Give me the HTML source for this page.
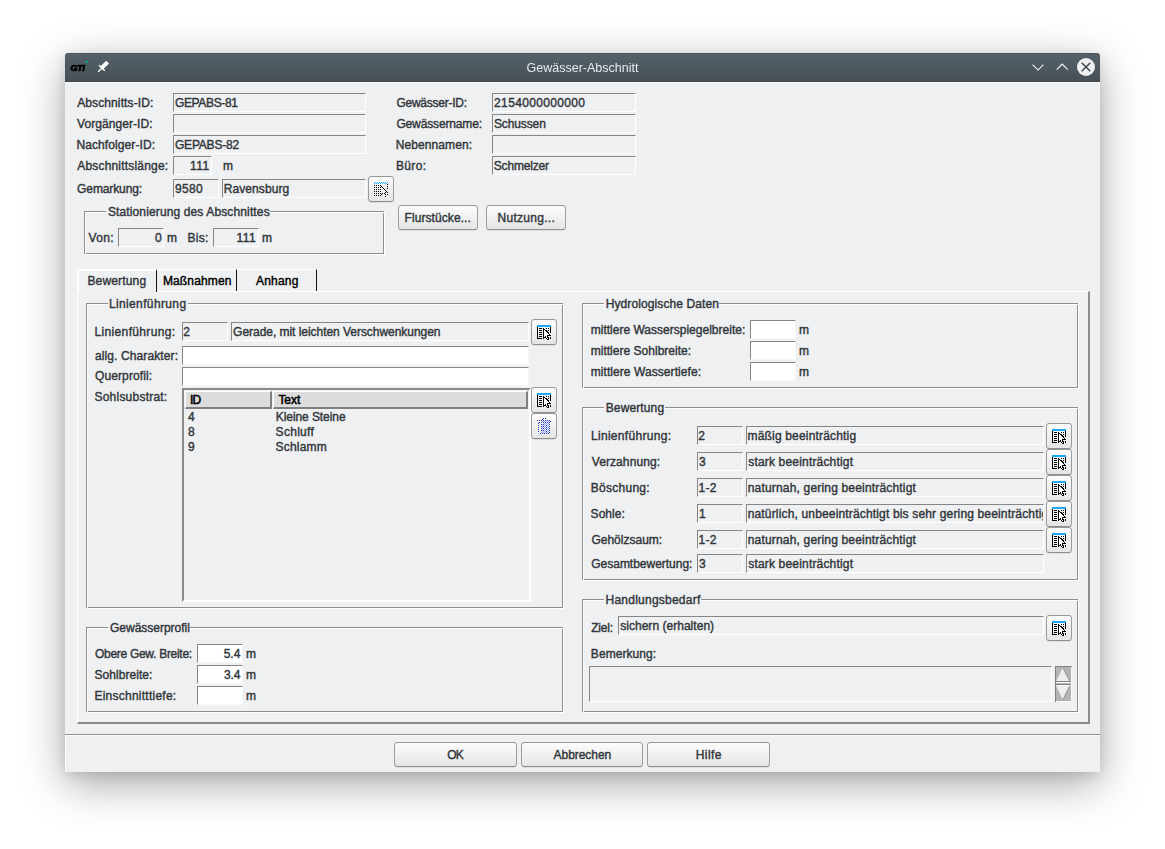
<!DOCTYPE html>
<html lang="de"><head><meta charset="utf-8"><title>Gewässer-Abschnitt</title>
<style>
html,body{margin:0;padding:0;background:#fff;}
body{width:1165px;height:849px;position:relative;overflow:hidden;font-family:"Liberation Sans",sans-serif;font-size:12px;color:#31363b;}
#win{position:absolute;left:65px;top:53px;width:1035px;height:719px;background:#eff0f1;border-radius:3px 3px 0 0;box-shadow:0 12px 44px rgba(0,0,0,.35),0 3px 12px rgba(0,0,0,.10);}
#tb{position:absolute;left:0;top:0;width:1035px;height:29px;box-sizing:border-box;border-radius:3px 3px 0 0;background:linear-gradient(#556169,#475057);border-top:1px solid #4b545b;border-bottom:1px solid #3f474d;}
#tbl{position:absolute;left:0;top:29px;width:1035px;height:1px;background:#f8f9f9;}
#title{position:absolute;left:0;top:1px;width:1035px;height:29px;line-height:28px;text-align:center;color:#e8eaeb;font-size:12.5px;will-change:transform;}
.abs{position:absolute;}
#gti{position:absolute;left:5.3px;top:7.8px;font:italic bold 9.5px/14px "Liberation Sans",sans-serif;color:#000;-webkit-text-stroke:0.7px #000;letter-spacing:-0.6px;}
#gdot{position:absolute;left:20px;top:7.7px;width:2.6px;height:2.6px;border-radius:50%;background:#00a58a;}
span{position:relative;}
.t{position:absolute;white-space:nowrap;-webkit-text-stroke:0.4px #31363b;}
.f{position:absolute;box-sizing:border-box;border-top:1px solid #868686;border-left:1px solid #868686;border-bottom:1px solid #fff;border-right:1px solid #fff;background:#eff0f1;white-space:nowrap;overflow:hidden;-webkit-text-stroke:0.4px #31363b;}
.f.w{background:#fff;border-right-color:#f4f5f5;border-bottom-color:#f7f8f8;}
.g{position:absolute;box-sizing:border-box;border:1px solid #8e8e8e;}
.gi{position:absolute;left:0;top:0;right:-2px;bottom:-2px;border:1px solid #fff;}
.gt{background:#eff0f1;padding:0 1px;}
.b{position:absolute;box-sizing:border-box;border:1px solid #9c9c9c;border-top-color:#979797;border-bottom-color:#8e8e8e;border-radius:3.5px;background:linear-gradient(#fcfcfc,#e5e5e5);text-align:center;white-space:nowrap;-webkit-text-stroke:0.4px #31363b;box-shadow:0 1px 0 rgba(0,0,0,.08);}
.b svg{position:absolute;left:4px;top:4px;}
.th{background:#dcdcdc;box-sizing:border-box;border-top:1px solid #fff;border-left:1px solid #fff;border-right:2px solid #7f7f7f;border-bottom:2px solid #7f7f7f;}
.hd{color:#000;-webkit-text-stroke:0.55px #000;}
.tb2{color:#000;-webkit-text-stroke:0.4px #000;}
</style></head><body>
<div id="win"><div id="tb"></div><div id="tbl"></div><div id="title">Gewässer-Abschnitt</div>
<div id="gti">GTI</div><div id="gdot"></div>
<svg class="abs" style="left:0;top:0" width="1035" height="29" viewBox="0 0 1035 29" fill="none" stroke="#fcfcfc" stroke-width="1.05">
<path d="M33.2 18.7 L37 14.9" stroke-width="1.4"/><path d="M33.9 12.2 L39.8 17.7" stroke-width="1.5"/>
<path d="M38.2 16.2 L35.4 13.3 L41.3 7.7 L44.1 10.6 Z" fill="#fcfcfc" stroke="none"/>
<path d="M967.6 11.7 L973 17.1 L978.4 11.7"/><path d="M991.7 16.6 L997.2 11.1 L1002.7 16.6"/>
<circle cx="1021" cy="14" r="9" fill="#eff0f1" stroke="none"/>
<path d="M1016.7 9.7 L1025.3 18.3 M1025.3 9.7 L1016.7 18.3" stroke="#3a3f44" stroke-width="1.3"/>
</svg></div>

<div class="t " style="left:77px;top:94px;height:19px;line-height:19px;"><span style="letter-spacing:0.11px;left:0.2px;">Abschnitts-ID:</span></div>
<div class="t " style="left:77px;top:115px;height:19px;line-height:19px;"><span style="letter-spacing:0.06px;left:0.1px;">Vorgänger-ID:</span></div>
<div class="t " style="left:77px;top:136px;height:19px;line-height:19px;"><span style="letter-spacing:0.09px;left:-0.5px;">Nachfolger-ID:</span></div>
<div class="t " style="left:77px;top:157px;height:19px;line-height:19px;"><span style="letter-spacing:0.19px;left:0.2px;">Abschnittslänge:</span></div>
<div class="t " style="left:77px;top:180px;height:19px;line-height:19px;"><span style="letter-spacing:-0.11px;left:0.1px;">Gemarkung:</span></div>
<div class="f" style="left:173px;top:93px;width:193px;height:19px;line-height:18px;padding-left:2px;"><span style="letter-spacing:-0.36px;left:-1.0px;">GEPABS-81</span></div>
<div class="f" style="left:173px;top:114px;width:193px;height:19px;line-height:18px;padding-left:2px;"></div>
<div class="f" style="left:173px;top:135px;width:193px;height:19px;line-height:18px;padding-left:2px;"><span style="letter-spacing:-0.21px;left:-1.0px;">GEPABS-82</span></div>
<div class="f" style="left:173px;top:156px;width:39px;height:19px;line-height:18px;text-align:right;padding-right:2px;"><span style="letter-spacing:0.45px;left:0.6px;">111</span></div>
<div class="t " style="left:223px;top:157px;height:19px;line-height:19px;"><span style="letter-spacing:0.00px;left:-0.1px;">m</span></div>
<div class="f" style="left:173px;top:179px;width:46px;height:19px;line-height:18px;padding-left:2px;"><span style="letter-spacing:0.32px;left:-0.9px;">9580</span></div>
<div class="f" style="left:222px;top:179px;width:144px;height:19px;line-height:18px;padding-left:2px;"><span style="letter-spacing:0.09px;left:-1.3px;">Ravensburg</span></div>
<div class="b " style="left:368px;top:176px;width:26px;height:26px;line-height:26px"><svg width="16" height="16" viewBox="0 0 16 16" shape-rendering="crispEdges"><rect x="2" y="1" width="1" height="1" fill="#1ea9f3"/><rect x="4" y="1" width="1" height="1" fill="#1ea9f3"/><rect x="6" y="1" width="1" height="1" fill="#1ea9f3"/><rect x="8" y="1" width="1" height="1" fill="#1ea9f3"/><rect x="10" y="1" width="1" height="1" fill="#1ea9f3"/><rect x="12" y="1" width="1" height="1" fill="#1ea9f3"/><rect x="14" y="1" width="1" height="1" fill="#1ea9f3"/><rect x="1" y="2" width="1" height="1" fill="#1ea9f3"/><rect x="3" y="2" width="1" height="1" fill="#1ea9f3"/><rect x="5" y="2" width="1" height="1" fill="#1ea9f3"/><rect x="7" y="2" width="1" height="1" fill="#1ea9f3"/><rect x="9" y="2" width="1" height="1" fill="#1ea9f3"/><rect x="11" y="2" width="1" height="1" fill="#1ea9f3"/><rect x="13" y="2" width="1" height="1" fill="#1ea9f3"/><rect x="14" y="3" width="1" height="1" fill="#000"/><rect x="1" y="4" width="1" height="1" fill="#000"/><rect x="3" y="4" width="1" height="1" fill="#000"/><rect x="5" y="4" width="1" height="1" fill="#000"/><rect x="7" y="4" width="1" height="1" fill="#000"/><rect x="8" y="5" width="1" height="1" fill="#000"/><rect x="14" y="5" width="1" height="1" fill="#000"/><rect x="1" y="6" width="1" height="1" fill="#000"/><rect x="3" y="6" width="1" height="1" fill="#000"/><rect x="5" y="6" width="1" height="1" fill="#000"/><rect x="7" y="6" width="1" height="1" fill="#000"/><rect x="9" y="6" width="1" height="1" fill="#000"/><rect x="10" y="7" width="1" height="1" fill="#000"/><rect x="14" y="7" width="1" height="1" fill="#000"/><rect x="1" y="8" width="1" height="1" fill="#000"/><rect x="3" y="8" width="1" height="1" fill="#000"/><rect x="5" y="8" width="1" height="1" fill="#000"/><rect x="7" y="8" width="1" height="1" fill="#000"/><rect x="11" y="8" width="1" height="1" fill="#000"/><rect x="12" y="9" width="1" height="1" fill="#000"/><rect x="1" y="10" width="1" height="1" fill="#000"/><rect x="3" y="10" width="1" height="1" fill="#000"/><rect x="5" y="10" width="1" height="1" fill="#000"/><rect x="7" y="10" width="1" height="1" fill="#000"/><rect x="13" y="10" width="1" height="1" fill="#000"/><rect x="12" y="11" width="1" height="1" fill="#000"/><rect x="14" y="11" width="1" height="1" fill="#000"/><rect x="1" y="12" width="1" height="1" fill="#000"/><rect x="3" y="12" width="1" height="1" fill="#000"/><rect x="5" y="12" width="1" height="1" fill="#000"/><rect x="7" y="12" width="1" height="1" fill="#000"/><rect x="9" y="12" width="1" height="1" fill="#000"/><rect x="11" y="12" width="1" height="1" fill="#000"/><rect x="8" y="13" width="1" height="1" fill="#000"/><rect x="12" y="13" width="1" height="1" fill="#000"/><rect x="14" y="13" width="1" height="1" fill="#000"/><rect x="1" y="14" width="1" height="1" fill="#000"/><rect x="3" y="14" width="1" height="1" fill="#000"/><rect x="5" y="14" width="1" height="1" fill="#000"/><rect x="7" y="14" width="1" height="1" fill="#000"/><rect x="12" y="15" width="1" height="1" fill="#000"/></svg></div>
<div class="t " style="left:396px;top:94px;height:19px;line-height:19px;"><span style="letter-spacing:-0.24px;left:0.4px;">Gewässer-ID:</span></div>
<div class="t " style="left:396px;top:115px;height:19px;line-height:19px;"><span style="letter-spacing:-0.14px;left:0.4px;">Gewässername:</span></div>
<div class="t " style="left:396px;top:136px;height:19px;line-height:19px;"><span style="letter-spacing:0.08px;left:-0.2px;">Nebennamen:</span></div>
<div class="t " style="left:396px;top:157px;height:19px;line-height:19px;"><span style="letter-spacing:0.36px;left:-0.1px;">Büro:</span></div>
<div class="f" style="left:492px;top:93px;width:144px;height:19px;line-height:18px;padding-left:2px;"><span style="letter-spacing:0.34px;left:-0.9px;">2154000000000</span></div>
<div class="f" style="left:492px;top:114px;width:144px;height:19px;line-height:18px;padding-left:2px;"><span style="letter-spacing:-0.11px;left:-1.1px;">Schussen</span></div>
<div class="f" style="left:492px;top:135px;width:144px;height:19px;line-height:18px;padding-left:2px;"></div>
<div class="f" style="left:492px;top:156px;width:144px;height:19px;line-height:18px;padding-left:2px;"><span style="letter-spacing:-0.16px;left:-1.3px;">Schmelzer</span></div>
<div class="g" style="left:84px;top:211px;width:300px;height:43px"><div class="gi"></div></div>
<div class="t gt" style="left:106px;top:203px;height:19px;line-height:19px;"><span style="letter-spacing:0.13px;left:0.9px;">Stationierung des Abschnittes</span></div>
<div class="t " style="left:88px;top:229px;height:19px;line-height:19px;"><span style="letter-spacing:0.31px;left:0.6px;">Von:</span></div>
<div class="f" style="left:118px;top:228px;width:46px;height:19px;line-height:18px;text-align:right;padding-right:2px;"><span style="letter-spacing:0.00px;left:0.8px;">0</span></div>
<div class="t " style="left:168px;top:229px;height:19px;line-height:19px;"><span style="letter-spacing:0.00px;left:-0.9px;">m</span></div>
<div class="t " style="left:188px;top:229px;height:19px;line-height:19px;"><span style="letter-spacing:0.29px;left:-0.6px;">Bis:</span></div>
<div class="f" style="left:213px;top:228px;width:46px;height:19px;line-height:18px;text-align:right;padding-right:2px;"><span style="letter-spacing:0.49px;left:0.3px;">111</span></div>
<div class="t " style="left:263px;top:229px;height:19px;line-height:19px;"><span style="letter-spacing:0.00px;left:-0.9px;">m</span></div>
<div class="b " style="left:398px;top:205px;width:80px;height:25px;line-height:25px"><span style="letter-spacing:0.08px;left:-0.3px;">Flurstücke...</span></div>
<div class="b " style="left:486px;top:205px;width:80px;height:25px;line-height:25px"><span style="letter-spacing:0.29px;left:0.3px;">Nutzung...</span></div>
<div class="abs" style="left:77px;top:291px;width:1013px;height:433px;box-sizing:border-box;border-top:1px solid #fff;border-left:1px solid #fff;border-right:2px solid #8c8c8c;border-bottom:2px solid #8c8c8c;"></div>
<div class="abs" style="left:77px;top:269px;width:80px;height:23px;box-sizing:border-box;border-top:2px solid #fff;border-left:2px solid #fff;border-right:1px solid #111;background:#eff0f1;"></div>
<div class="abs" style="left:157px;top:269px;width:80px;height:22px;box-sizing:border-box;border-top:1px solid #fff;border-right:1px solid #111;"></div>
<div class="abs" style="left:237px;top:269px;width:80px;height:22px;box-sizing:border-box;border-top:1px solid #fff;border-right:1px solid #111;"></div>
<div class="t " style="left:88px;top:272px;height:19px;line-height:19px;"><span style="letter-spacing:0.17px;left:-0.6px;">Bewertung</span></div>
<div class="t tb2" style="left:163px;top:272px;height:19px;line-height:19px;"><span style="letter-spacing:0.14px;left:-0.1px;">Maßnahmen</span></div>
<div class="t tb2" style="left:256px;top:272px;height:19px;line-height:19px;"><span style="letter-spacing:0.19px;left:0.0px;">Anhang</span></div>
<div class="g" style="left:86px;top:303px;width:477px;height:305px"><div class="gi"></div></div>
<div class="t gt" style="left:108px;top:295px;height:19px;line-height:19px;"><span style="letter-spacing:0.37px;left:-0.1px;">Linienführung</span></div>
<div class="t " style="left:95px;top:323px;height:19px;line-height:19px;"><span style="letter-spacing:0.35px;left:-0.5px;">Linienführung:</span></div>
<div class="f" style="left:182px;top:322px;width:46px;height:19px;line-height:18px;padding-left:2px;"><span style="letter-spacing:0.00px;left:-1.7px;">2</span></div>
<div class="f" style="left:231px;top:322px;width:298px;height:19px;line-height:18px;padding-left:2px;"><span style="letter-spacing:-0.04px;left:-0.9px;">Gerade, mit leichten Verschwenkungen</span></div>
<div class="b " style="left:531px;top:319px;width:26px;height:26px;line-height:26px"><svg width="16" height="16" viewBox="0 0 16 16" shape-rendering="crispEdges"><rect x="1" y="1" width="14" height="1" fill="#1ea9f3"/><rect x="1" y="2" width="14" height="1" fill="#1ea9f3"/><rect x="1" y="3" width="1" height="1" fill="#000"/><rect x="14" y="3" width="1" height="1" fill="#000"/><rect x="1" y="4" width="1" height="1" fill="#000"/><rect x="3" y="4" width="3" height="1" fill="#000"/><rect x="7" y="4" width="1" height="1" fill="#000"/><rect x="10" y="4" width="1" height="1" fill="#000"/><rect x="12" y="4" width="1" height="1" fill="#000"/><rect x="14" y="4" width="1" height="1" fill="#000"/><rect x="1" y="5" width="1" height="1" fill="#000"/><rect x="7" y="5" width="2" height="1" fill="#000"/><rect x="14" y="5" width="1" height="1" fill="#000"/><rect x="1" y="6" width="1" height="1" fill="#000"/><rect x="3" y="6" width="3" height="1" fill="#000"/><rect x="7" y="6" width="1" height="1" fill="#000"/><rect x="9" y="6" width="2" height="1" fill="#000"/><rect x="12" y="6" width="1" height="1" fill="#000"/><rect x="14" y="6" width="1" height="1" fill="#000"/><rect x="8" y="6" width="1" height="1" fill="#fff"/><rect x="1" y="7" width="1" height="1" fill="#000"/><rect x="7" y="7" width="1" height="1" fill="#000"/><rect x="10" y="7" width="2" height="1" fill="#000"/><rect x="14" y="7" width="1" height="1" fill="#000"/><rect x="8" y="7" width="2" height="1" fill="#fff"/><rect x="1" y="8" width="1" height="1" fill="#000"/><rect x="3" y="8" width="3" height="1" fill="#000"/><rect x="7" y="8" width="1" height="1" fill="#000"/><rect x="11" y="8" width="2" height="1" fill="#000"/><rect x="14" y="8" width="1" height="1" fill="#000"/><rect x="8" y="8" width="3" height="1" fill="#fff"/><rect x="1" y="9" width="1" height="1" fill="#000"/><rect x="7" y="9" width="1" height="1" fill="#000"/><rect x="12" y="9" width="1" height="1" fill="#000"/><rect x="8" y="9" width="4" height="1" fill="#fff"/><rect x="1" y="10" width="1" height="1" fill="#000"/><rect x="3" y="10" width="3" height="1" fill="#000"/><rect x="7" y="10" width="1" height="1" fill="#000"/><rect x="13" y="10" width="1" height="1" fill="#000"/><rect x="8" y="10" width="5" height="1" fill="#fff"/><rect x="1" y="11" width="1" height="1" fill="#000"/><rect x="7" y="11" width="1" height="1" fill="#000"/><rect x="11" y="11" width="4" height="1" fill="#000"/><rect x="8" y="11" width="3" height="1" fill="#fff"/><rect x="1" y="12" width="1" height="1" fill="#000"/><rect x="3" y="12" width="3" height="1" fill="#000"/><rect x="7" y="12" width="1" height="1" fill="#000"/><rect x="9" y="12" width="1" height="1" fill="#000"/><rect x="11" y="12" width="1" height="1" fill="#000"/><rect x="8" y="12" width="1" height="1" fill="#fff"/><rect x="10" y="12" width="1" height="1" fill="#fff"/><rect x="1" y="13" width="1" height="1" fill="#000"/><rect x="7" y="13" width="3" height="1" fill="#000"/><rect x="11" y="13" width="2" height="1" fill="#000"/><rect x="14" y="13" width="1" height="1" fill="#000"/><rect x="10" y="13" width="1" height="1" fill="#fff"/><rect x="1" y="14" width="5" height="1" fill="#000"/><rect x="7" y="14" width="1" height="1" fill="#000"/><rect x="10" y="14" width="1" height="1" fill="#000"/><rect x="12" y="14" width="1" height="1" fill="#000"/><rect x="14" y="14" width="1" height="1" fill="#000"/><rect x="11" y="14" width="1" height="1" fill="#fff"/><rect x="11" y="15" width="2" height="1" fill="#000"/></svg></div>
<div class="t " style="left:95px;top:347px;height:19px;line-height:19px;"><span style="letter-spacing:0.11px;left:0.0px;">allg. Charakter:</span></div>
<div class="f w" style="left:182px;top:346px;width:347px;height:19px;line-height:18px;padding-left:2px;"></div>
<div class="t " style="left:95px;top:367px;height:19px;line-height:19px;"><span style="letter-spacing:0.11px;left:-0.0px;">Querprofil:</span></div>
<div class="f w" style="left:182px;top:367px;width:347px;height:19px;line-height:18px;padding-left:2px;"></div>
<div class="t " style="left:95px;top:388px;height:19px;line-height:19px;"><span style="letter-spacing:0.22px;left:-0.5px;">Sohlsubstrat:</span></div>
<div class="abs" style="left:182px;top:388px;width:349px;height:214px;box-sizing:border-box;border-top:2px solid #8a8a8a;border-left:2px solid #8a8a8a;border-right:2px solid #fff;border-bottom:2px solid #fff;"></div>
<div class="abs th" style="left:185px;top:391px;width:87px;height:18px;"></div>
<div class="abs th" style="left:273px;top:391px;width:255px;height:18px;"></div>
<div class="t hd" style="left:190px;top:391px;height:18px;line-height:18px;"><span style="letter-spacing:-0.80px;left:-0.1px;">ID</span></div>
<div class="t hd" style="left:278px;top:391px;height:18px;line-height:18px;"><span style="letter-spacing:-0.03px;left:0.4px;">Text</span></div>
<div class="t " style="left:188px;top:410px;height:15px;line-height:15px;"><span>4</span></div>
<div class="t " style="left:276px;top:410px;height:15px;line-height:15px;"><span style="letter-spacing:-0.08px;left:-0.2px;">Kleine Steine</span></div>
<div class="t " style="left:188px;top:425px;height:15px;line-height:15px;"><span>8</span></div>
<div class="t " style="left:276px;top:425px;height:15px;line-height:15px;"><span style="letter-spacing:0.28px;left:-0.4px;">Schluff</span></div>
<div class="t " style="left:188px;top:440px;height:15px;line-height:15px;"><span>9</span></div>
<div class="t " style="left:276px;top:440px;height:15px;line-height:15px;"><span style="letter-spacing:0.19px;left:-0.4px;">Schlamm</span></div>
<div class="b " style="left:531px;top:387px;width:26px;height:26px;line-height:26px"><svg width="16" height="16" viewBox="0 0 16 16" shape-rendering="crispEdges"><rect x="1" y="1" width="14" height="1" fill="#1ea9f3"/><rect x="1" y="2" width="14" height="1" fill="#1ea9f3"/><rect x="1" y="3" width="1" height="1" fill="#000"/><rect x="14" y="3" width="1" height="1" fill="#000"/><rect x="1" y="4" width="1" height="1" fill="#000"/><rect x="3" y="4" width="3" height="1" fill="#000"/><rect x="7" y="4" width="1" height="1" fill="#000"/><rect x="10" y="4" width="1" height="1" fill="#000"/><rect x="12" y="4" width="1" height="1" fill="#000"/><rect x="14" y="4" width="1" height="1" fill="#000"/><rect x="1" y="5" width="1" height="1" fill="#000"/><rect x="7" y="5" width="2" height="1" fill="#000"/><rect x="14" y="5" width="1" height="1" fill="#000"/><rect x="1" y="6" width="1" height="1" fill="#000"/><rect x="3" y="6" width="3" height="1" fill="#000"/><rect x="7" y="6" width="1" height="1" fill="#000"/><rect x="9" y="6" width="2" height="1" fill="#000"/><rect x="12" y="6" width="1" height="1" fill="#000"/><rect x="14" y="6" width="1" height="1" fill="#000"/><rect x="8" y="6" width="1" height="1" fill="#fff"/><rect x="1" y="7" width="1" height="1" fill="#000"/><rect x="7" y="7" width="1" height="1" fill="#000"/><rect x="10" y="7" width="2" height="1" fill="#000"/><rect x="14" y="7" width="1" height="1" fill="#000"/><rect x="8" y="7" width="2" height="1" fill="#fff"/><rect x="1" y="8" width="1" height="1" fill="#000"/><rect x="3" y="8" width="3" height="1" fill="#000"/><rect x="7" y="8" width="1" height="1" fill="#000"/><rect x="11" y="8" width="2" height="1" fill="#000"/><rect x="14" y="8" width="1" height="1" fill="#000"/><rect x="8" y="8" width="3" height="1" fill="#fff"/><rect x="1" y="9" width="1" height="1" fill="#000"/><rect x="7" y="9" width="1" height="1" fill="#000"/><rect x="12" y="9" width="1" height="1" fill="#000"/><rect x="8" y="9" width="4" height="1" fill="#fff"/><rect x="1" y="10" width="1" height="1" fill="#000"/><rect x="3" y="10" width="3" height="1" fill="#000"/><rect x="7" y="10" width="1" height="1" fill="#000"/><rect x="13" y="10" width="1" height="1" fill="#000"/><rect x="8" y="10" width="5" height="1" fill="#fff"/><rect x="1" y="11" width="1" height="1" fill="#000"/><rect x="7" y="11" width="1" height="1" fill="#000"/><rect x="11" y="11" width="4" height="1" fill="#000"/><rect x="8" y="11" width="3" height="1" fill="#fff"/><rect x="1" y="12" width="1" height="1" fill="#000"/><rect x="3" y="12" width="3" height="1" fill="#000"/><rect x="7" y="12" width="1" height="1" fill="#000"/><rect x="9" y="12" width="1" height="1" fill="#000"/><rect x="11" y="12" width="1" height="1" fill="#000"/><rect x="8" y="12" width="1" height="1" fill="#fff"/><rect x="10" y="12" width="1" height="1" fill="#fff"/><rect x="1" y="13" width="1" height="1" fill="#000"/><rect x="7" y="13" width="3" height="1" fill="#000"/><rect x="11" y="13" width="2" height="1" fill="#000"/><rect x="14" y="13" width="1" height="1" fill="#000"/><rect x="10" y="13" width="1" height="1" fill="#fff"/><rect x="1" y="14" width="5" height="1" fill="#000"/><rect x="7" y="14" width="1" height="1" fill="#000"/><rect x="10" y="14" width="1" height="1" fill="#000"/><rect x="12" y="14" width="1" height="1" fill="#000"/><rect x="14" y="14" width="1" height="1" fill="#000"/><rect x="11" y="14" width="1" height="1" fill="#fff"/><rect x="11" y="15" width="2" height="1" fill="#000"/></svg></div>
<div class="b " style="left:531px;top:413px;width:26px;height:26px;line-height:26px"><svg width="16" height="16" viewBox="0 0 16 16" shape-rendering="crispEdges"><rect x="7" y="0" width="1" height="1" fill="#2335b0"/><rect x="9" y="0" width="1" height="1" fill="#2335b0"/><rect x="6" y="1" width="1" height="1" fill="#2335b0"/><rect x="1" y="2" width="1" height="1" fill="#2335b0"/><rect x="3" y="2" width="1" height="1" fill="#2335b0"/><rect x="5" y="2" width="1" height="1" fill="#2335b0"/><rect x="7" y="2" width="1" height="1" fill="#2335b0"/><rect x="9" y="2" width="1" height="1" fill="#2335b0"/><rect x="11" y="2" width="1" height="1" fill="#2335b0"/><rect x="13" y="2" width="1" height="1" fill="#2335b0"/><rect x="14" y="3" width="1" height="1" fill="#2335b0"/><rect x="6" y="3" width="1" height="1" fill="#86a0f6"/><rect x="8" y="3" width="1" height="1" fill="#86a0f6"/><rect x="10" y="3" width="1" height="1" fill="#86a0f6"/><rect x="12" y="3" width="1" height="1" fill="#86a0f6"/><rect x="3" y="4" width="1" height="1" fill="#2335b0"/><rect x="5" y="4" width="1" height="1" fill="#2335b0"/><rect x="7" y="4" width="1" height="1" fill="#2335b0"/><rect x="9" y="4" width="1" height="1" fill="#2335b0"/><rect x="11" y="4" width="1" height="1" fill="#2335b0"/><rect x="13" y="4" width="1" height="1" fill="#2335b0"/><rect x="2" y="5" width="1" height="1" fill="#2335b0"/><rect x="8" y="5" width="1" height="1" fill="#86a0f6"/><rect x="10" y="5" width="1" height="1" fill="#86a0f6"/><rect x="12" y="5" width="1" height="1" fill="#86a0f6"/><rect x="5" y="6" width="1" height="1" fill="#2335b0"/><rect x="7" y="6" width="1" height="1" fill="#2335b0"/><rect x="13" y="6" width="1" height="1" fill="#2335b0"/><rect x="9" y="6" width="1" height="1" fill="#86a0f6"/><rect x="11" y="6" width="1" height="1" fill="#86a0f6"/><rect x="2" y="7" width="1" height="1" fill="#2335b0"/><rect x="10" y="7" width="1" height="1" fill="#2335b0"/><rect x="6" y="7" width="1" height="1" fill="#86a0f6"/><rect x="8" y="7" width="1" height="1" fill="#86a0f6"/><rect x="12" y="7" width="1" height="1" fill="#86a0f6"/><rect x="5" y="8" width="1" height="1" fill="#2335b0"/><rect x="7" y="8" width="1" height="1" fill="#2335b0"/><rect x="13" y="8" width="1" height="1" fill="#2335b0"/><rect x="9" y="8" width="1" height="1" fill="#86a0f6"/><rect x="11" y="8" width="1" height="1" fill="#86a0f6"/><rect x="2" y="9" width="1" height="1" fill="#2335b0"/><rect x="10" y="9" width="1" height="1" fill="#2335b0"/><rect x="6" y="9" width="1" height="1" fill="#86a0f6"/><rect x="8" y="9" width="1" height="1" fill="#86a0f6"/><rect x="12" y="9" width="1" height="1" fill="#86a0f6"/><rect x="5" y="10" width="1" height="1" fill="#2335b0"/><rect x="7" y="10" width="1" height="1" fill="#2335b0"/><rect x="13" y="10" width="1" height="1" fill="#2335b0"/><rect x="9" y="10" width="1" height="1" fill="#86a0f6"/><rect x="11" y="10" width="1" height="1" fill="#86a0f6"/><rect x="2" y="11" width="1" height="1" fill="#2335b0"/><rect x="10" y="11" width="1" height="1" fill="#2335b0"/><rect x="6" y="11" width="1" height="1" fill="#86a0f6"/><rect x="8" y="11" width="1" height="1" fill="#86a0f6"/><rect x="12" y="11" width="1" height="1" fill="#86a0f6"/><rect x="5" y="12" width="1" height="1" fill="#2335b0"/><rect x="7" y="12" width="1" height="1" fill="#2335b0"/><rect x="13" y="12" width="1" height="1" fill="#2335b0"/><rect x="9" y="12" width="1" height="1" fill="#86a0f6"/><rect x="11" y="12" width="1" height="1" fill="#86a0f6"/><rect x="2" y="13" width="1" height="1" fill="#2335b0"/><rect x="10" y="13" width="1" height="1" fill="#2335b0"/><rect x="6" y="13" width="1" height="1" fill="#86a0f6"/><rect x="8" y="13" width="1" height="1" fill="#86a0f6"/><rect x="12" y="13" width="1" height="1" fill="#86a0f6"/><rect x="13" y="14" width="1" height="1" fill="#2335b0"/><rect x="5" y="14" width="1" height="1" fill="#86a0f6"/><rect x="7" y="14" width="1" height="1" fill="#86a0f6"/><rect x="9" y="14" width="1" height="1" fill="#86a0f6"/><rect x="11" y="14" width="1" height="1" fill="#86a0f6"/><rect x="4" y="15" width="1" height="1" fill="#2335b0"/><rect x="6" y="15" width="1" height="1" fill="#2335b0"/><rect x="8" y="15" width="1" height="1" fill="#2335b0"/><rect x="10" y="15" width="1" height="1" fill="#2335b0"/><rect x="12" y="15" width="1" height="1" fill="#2335b0"/></svg></div>
<div class="g" style="left:86px;top:627px;width:477px;height:85px"><div class="gi"></div></div>
<div class="t gt" style="left:108px;top:619px;height:19px;line-height:19px;"><span style="letter-spacing:-0.01px;left:1.0px;">Gewässerprofil</span></div>
<div class="t " style="left:95px;top:645px;height:19px;line-height:19px;"><span style="letter-spacing:-0.29px;left:-0.0px;">Obere Gew. Breite:</span></div>
<div class="f w" style="left:197px;top:644px;width:46px;height:19px;line-height:18px;text-align:right;padding-right:2px;"><span style="letter-spacing:-0.02px;left:0.3px;">5.4</span></div>
<div class="t " style="left:247px;top:645px;height:19px;line-height:19px;"><span style="letter-spacing:0.00px;left:-0.9px;">m</span></div>
<div class="t " style="left:95px;top:666px;height:19px;line-height:19px;"><span style="letter-spacing:0.06px;left:-0.6px;">Sohlbreite:</span></div>
<div class="f w" style="left:197px;top:665px;width:46px;height:19px;line-height:18px;text-align:right;padding-right:2px;"><span style="letter-spacing:-0.06px;left:0.4px;">3.4</span></div>
<div class="t " style="left:247px;top:666px;height:19px;line-height:19px;"><span style="letter-spacing:0.00px;left:-0.9px;">m</span></div>
<div class="t " style="left:95px;top:687px;height:19px;line-height:19px;"><span style="letter-spacing:0.25px;left:-0.6px;">Einschnitttiefe:</span></div>
<div class="f w" style="left:197px;top:686px;width:46px;height:19px;line-height:18px;text-align:right;padding-right:2px;"></div>
<div class="t " style="left:247px;top:687px;height:19px;line-height:19px;"><span style="letter-spacing:0.00px;left:-0.9px;">m</span></div>
<div class="g" style="left:582px;top:303px;width:496px;height:85px"><div class="gi"></div></div>
<div class="t gt" style="left:604px;top:295px;height:19px;line-height:19px;"><span style="letter-spacing:0.10px;left:0.7px;">Hydrologische Daten</span></div>
<div class="t " style="left:591px;top:321px;height:19px;line-height:19px;"><span style="letter-spacing:0.01px;left:-0.3px;">mittlere Wasserspiegelbreite:</span></div>
<div class="f w" style="left:750px;top:320px;width:46px;height:19px;line-height:18px;padding-left:2px;"></div>
<div class="t " style="left:800px;top:321px;height:19px;line-height:19px;"><span style="letter-spacing:0.00px;left:-0.9px;">m</span></div>
<div class="t " style="left:591px;top:342px;height:19px;line-height:19px;"><span style="letter-spacing:0.02px;left:-0.3px;">mittlere Sohlbreite:</span></div>
<div class="f w" style="left:750px;top:341px;width:46px;height:19px;line-height:18px;padding-left:2px;"></div>
<div class="t " style="left:800px;top:342px;height:19px;line-height:19px;"><span style="letter-spacing:0.00px;left:-0.9px;">m</span></div>
<div class="t " style="left:591px;top:363px;height:19px;line-height:19px;"><span style="letter-spacing:0.07px;left:-0.3px;">mittlere Wassertiefe:</span></div>
<div class="f w" style="left:750px;top:362px;width:46px;height:19px;line-height:18px;padding-left:2px;"></div>
<div class="t " style="left:800px;top:363px;height:19px;line-height:19px;"><span style="letter-spacing:0.00px;left:-0.9px;">m</span></div>
<div class="g" style="left:582px;top:407px;width:496px;height:173px"><div class="gi"></div></div>
<div class="t gt" style="left:604px;top:399px;height:19px;line-height:19px;"><span style="letter-spacing:0.13px;left:0.7px;">Bewertung</span></div>
<div class="t " style="left:591px;top:427px;height:19px;line-height:19px;"><span style="letter-spacing:0.32px;left:-0.1px;">Linienführung:</span></div>
<div class="f" style="left:697px;top:426px;width:46px;height:19px;line-height:18px;padding-left:2px;"><span style="letter-spacing:0.00px;left:-1.7px;">2</span></div>
<div class="f" style="left:746px;top:426px;width:298px;height:19px;line-height:18px;padding-left:2px;"><span style="letter-spacing:0.18px;left:-1.5px;">mäßig beeinträchtig</span></div>
<div class="b " style="left:1046px;top:423px;width:26px;height:26px;line-height:26px"><svg width="16" height="16" viewBox="0 0 16 16" shape-rendering="crispEdges"><rect x="1" y="1" width="14" height="1" fill="#1ea9f3"/><rect x="1" y="2" width="14" height="1" fill="#1ea9f3"/><rect x="1" y="3" width="1" height="1" fill="#000"/><rect x="14" y="3" width="1" height="1" fill="#000"/><rect x="1" y="4" width="1" height="1" fill="#000"/><rect x="3" y="4" width="3" height="1" fill="#000"/><rect x="7" y="4" width="1" height="1" fill="#000"/><rect x="10" y="4" width="1" height="1" fill="#000"/><rect x="12" y="4" width="1" height="1" fill="#000"/><rect x="14" y="4" width="1" height="1" fill="#000"/><rect x="1" y="5" width="1" height="1" fill="#000"/><rect x="7" y="5" width="2" height="1" fill="#000"/><rect x="14" y="5" width="1" height="1" fill="#000"/><rect x="1" y="6" width="1" height="1" fill="#000"/><rect x="3" y="6" width="3" height="1" fill="#000"/><rect x="7" y="6" width="1" height="1" fill="#000"/><rect x="9" y="6" width="2" height="1" fill="#000"/><rect x="12" y="6" width="1" height="1" fill="#000"/><rect x="14" y="6" width="1" height="1" fill="#000"/><rect x="8" y="6" width="1" height="1" fill="#fff"/><rect x="1" y="7" width="1" height="1" fill="#000"/><rect x="7" y="7" width="1" height="1" fill="#000"/><rect x="10" y="7" width="2" height="1" fill="#000"/><rect x="14" y="7" width="1" height="1" fill="#000"/><rect x="8" y="7" width="2" height="1" fill="#fff"/><rect x="1" y="8" width="1" height="1" fill="#000"/><rect x="3" y="8" width="3" height="1" fill="#000"/><rect x="7" y="8" width="1" height="1" fill="#000"/><rect x="11" y="8" width="2" height="1" fill="#000"/><rect x="14" y="8" width="1" height="1" fill="#000"/><rect x="8" y="8" width="3" height="1" fill="#fff"/><rect x="1" y="9" width="1" height="1" fill="#000"/><rect x="7" y="9" width="1" height="1" fill="#000"/><rect x="12" y="9" width="1" height="1" fill="#000"/><rect x="8" y="9" width="4" height="1" fill="#fff"/><rect x="1" y="10" width="1" height="1" fill="#000"/><rect x="3" y="10" width="3" height="1" fill="#000"/><rect x="7" y="10" width="1" height="1" fill="#000"/><rect x="13" y="10" width="1" height="1" fill="#000"/><rect x="8" y="10" width="5" height="1" fill="#fff"/><rect x="1" y="11" width="1" height="1" fill="#000"/><rect x="7" y="11" width="1" height="1" fill="#000"/><rect x="11" y="11" width="4" height="1" fill="#000"/><rect x="8" y="11" width="3" height="1" fill="#fff"/><rect x="1" y="12" width="1" height="1" fill="#000"/><rect x="3" y="12" width="3" height="1" fill="#000"/><rect x="7" y="12" width="1" height="1" fill="#000"/><rect x="9" y="12" width="1" height="1" fill="#000"/><rect x="11" y="12" width="1" height="1" fill="#000"/><rect x="8" y="12" width="1" height="1" fill="#fff"/><rect x="10" y="12" width="1" height="1" fill="#fff"/><rect x="1" y="13" width="1" height="1" fill="#000"/><rect x="7" y="13" width="3" height="1" fill="#000"/><rect x="11" y="13" width="2" height="1" fill="#000"/><rect x="14" y="13" width="1" height="1" fill="#000"/><rect x="10" y="13" width="1" height="1" fill="#fff"/><rect x="1" y="14" width="5" height="1" fill="#000"/><rect x="7" y="14" width="1" height="1" fill="#000"/><rect x="10" y="14" width="1" height="1" fill="#000"/><rect x="12" y="14" width="1" height="1" fill="#000"/><rect x="14" y="14" width="1" height="1" fill="#000"/><rect x="11" y="14" width="1" height="1" fill="#fff"/><rect x="11" y="15" width="2" height="1" fill="#000"/></svg></div>
<div class="t " style="left:591px;top:453px;height:19px;line-height:19px;"><span style="letter-spacing:0.10px;left:0.7px;">Verzahnung:</span></div>
<div class="f" style="left:697px;top:452px;width:46px;height:19px;line-height:18px;padding-left:2px;"><span style="letter-spacing:0.00px;left:-0.9px;">3</span></div>
<div class="f" style="left:746px;top:452px;width:298px;height:19px;line-height:18px;padding-left:2px;"><span style="letter-spacing:0.18px;left:-0.8px;">stark beeinträchtigt</span></div>
<div class="b " style="left:1046px;top:449px;width:26px;height:26px;line-height:26px"><svg width="16" height="16" viewBox="0 0 16 16" shape-rendering="crispEdges"><rect x="1" y="1" width="14" height="1" fill="#1ea9f3"/><rect x="1" y="2" width="14" height="1" fill="#1ea9f3"/><rect x="1" y="3" width="1" height="1" fill="#000"/><rect x="14" y="3" width="1" height="1" fill="#000"/><rect x="1" y="4" width="1" height="1" fill="#000"/><rect x="3" y="4" width="3" height="1" fill="#000"/><rect x="7" y="4" width="1" height="1" fill="#000"/><rect x="10" y="4" width="1" height="1" fill="#000"/><rect x="12" y="4" width="1" height="1" fill="#000"/><rect x="14" y="4" width="1" height="1" fill="#000"/><rect x="1" y="5" width="1" height="1" fill="#000"/><rect x="7" y="5" width="2" height="1" fill="#000"/><rect x="14" y="5" width="1" height="1" fill="#000"/><rect x="1" y="6" width="1" height="1" fill="#000"/><rect x="3" y="6" width="3" height="1" fill="#000"/><rect x="7" y="6" width="1" height="1" fill="#000"/><rect x="9" y="6" width="2" height="1" fill="#000"/><rect x="12" y="6" width="1" height="1" fill="#000"/><rect x="14" y="6" width="1" height="1" fill="#000"/><rect x="8" y="6" width="1" height="1" fill="#fff"/><rect x="1" y="7" width="1" height="1" fill="#000"/><rect x="7" y="7" width="1" height="1" fill="#000"/><rect x="10" y="7" width="2" height="1" fill="#000"/><rect x="14" y="7" width="1" height="1" fill="#000"/><rect x="8" y="7" width="2" height="1" fill="#fff"/><rect x="1" y="8" width="1" height="1" fill="#000"/><rect x="3" y="8" width="3" height="1" fill="#000"/><rect x="7" y="8" width="1" height="1" fill="#000"/><rect x="11" y="8" width="2" height="1" fill="#000"/><rect x="14" y="8" width="1" height="1" fill="#000"/><rect x="8" y="8" width="3" height="1" fill="#fff"/><rect x="1" y="9" width="1" height="1" fill="#000"/><rect x="7" y="9" width="1" height="1" fill="#000"/><rect x="12" y="9" width="1" height="1" fill="#000"/><rect x="8" y="9" width="4" height="1" fill="#fff"/><rect x="1" y="10" width="1" height="1" fill="#000"/><rect x="3" y="10" width="3" height="1" fill="#000"/><rect x="7" y="10" width="1" height="1" fill="#000"/><rect x="13" y="10" width="1" height="1" fill="#000"/><rect x="8" y="10" width="5" height="1" fill="#fff"/><rect x="1" y="11" width="1" height="1" fill="#000"/><rect x="7" y="11" width="1" height="1" fill="#000"/><rect x="11" y="11" width="4" height="1" fill="#000"/><rect x="8" y="11" width="3" height="1" fill="#fff"/><rect x="1" y="12" width="1" height="1" fill="#000"/><rect x="3" y="12" width="3" height="1" fill="#000"/><rect x="7" y="12" width="1" height="1" fill="#000"/><rect x="9" y="12" width="1" height="1" fill="#000"/><rect x="11" y="12" width="1" height="1" fill="#000"/><rect x="8" y="12" width="1" height="1" fill="#fff"/><rect x="10" y="12" width="1" height="1" fill="#fff"/><rect x="1" y="13" width="1" height="1" fill="#000"/><rect x="7" y="13" width="3" height="1" fill="#000"/><rect x="11" y="13" width="2" height="1" fill="#000"/><rect x="14" y="13" width="1" height="1" fill="#000"/><rect x="10" y="13" width="1" height="1" fill="#fff"/><rect x="1" y="14" width="5" height="1" fill="#000"/><rect x="7" y="14" width="1" height="1" fill="#000"/><rect x="10" y="14" width="1" height="1" fill="#000"/><rect x="12" y="14" width="1" height="1" fill="#000"/><rect x="14" y="14" width="1" height="1" fill="#000"/><rect x="11" y="14" width="1" height="1" fill="#fff"/><rect x="11" y="15" width="2" height="1" fill="#000"/></svg></div>
<div class="t " style="left:591px;top:479px;height:19px;line-height:19px;"><span style="letter-spacing:0.26px;left:-0.2px;">Böschung:</span></div>
<div class="f" style="left:697px;top:478px;width:46px;height:19px;line-height:18px;padding-left:2px;"><span style="letter-spacing:0.26px;left:-1.5px;">1-2</span></div>
<div class="f" style="left:746px;top:478px;width:298px;height:19px;line-height:18px;padding-left:2px;"><span style="letter-spacing:0.18px;left:-1.3px;">naturnah, gering beeinträchtigt</span></div>
<div class="b " style="left:1046px;top:475px;width:26px;height:26px;line-height:26px"><svg width="16" height="16" viewBox="0 0 16 16" shape-rendering="crispEdges"><rect x="1" y="1" width="14" height="1" fill="#1ea9f3"/><rect x="1" y="2" width="14" height="1" fill="#1ea9f3"/><rect x="1" y="3" width="1" height="1" fill="#000"/><rect x="14" y="3" width="1" height="1" fill="#000"/><rect x="1" y="4" width="1" height="1" fill="#000"/><rect x="3" y="4" width="3" height="1" fill="#000"/><rect x="7" y="4" width="1" height="1" fill="#000"/><rect x="10" y="4" width="1" height="1" fill="#000"/><rect x="12" y="4" width="1" height="1" fill="#000"/><rect x="14" y="4" width="1" height="1" fill="#000"/><rect x="1" y="5" width="1" height="1" fill="#000"/><rect x="7" y="5" width="2" height="1" fill="#000"/><rect x="14" y="5" width="1" height="1" fill="#000"/><rect x="1" y="6" width="1" height="1" fill="#000"/><rect x="3" y="6" width="3" height="1" fill="#000"/><rect x="7" y="6" width="1" height="1" fill="#000"/><rect x="9" y="6" width="2" height="1" fill="#000"/><rect x="12" y="6" width="1" height="1" fill="#000"/><rect x="14" y="6" width="1" height="1" fill="#000"/><rect x="8" y="6" width="1" height="1" fill="#fff"/><rect x="1" y="7" width="1" height="1" fill="#000"/><rect x="7" y="7" width="1" height="1" fill="#000"/><rect x="10" y="7" width="2" height="1" fill="#000"/><rect x="14" y="7" width="1" height="1" fill="#000"/><rect x="8" y="7" width="2" height="1" fill="#fff"/><rect x="1" y="8" width="1" height="1" fill="#000"/><rect x="3" y="8" width="3" height="1" fill="#000"/><rect x="7" y="8" width="1" height="1" fill="#000"/><rect x="11" y="8" width="2" height="1" fill="#000"/><rect x="14" y="8" width="1" height="1" fill="#000"/><rect x="8" y="8" width="3" height="1" fill="#fff"/><rect x="1" y="9" width="1" height="1" fill="#000"/><rect x="7" y="9" width="1" height="1" fill="#000"/><rect x="12" y="9" width="1" height="1" fill="#000"/><rect x="8" y="9" width="4" height="1" fill="#fff"/><rect x="1" y="10" width="1" height="1" fill="#000"/><rect x="3" y="10" width="3" height="1" fill="#000"/><rect x="7" y="10" width="1" height="1" fill="#000"/><rect x="13" y="10" width="1" height="1" fill="#000"/><rect x="8" y="10" width="5" height="1" fill="#fff"/><rect x="1" y="11" width="1" height="1" fill="#000"/><rect x="7" y="11" width="1" height="1" fill="#000"/><rect x="11" y="11" width="4" height="1" fill="#000"/><rect x="8" y="11" width="3" height="1" fill="#fff"/><rect x="1" y="12" width="1" height="1" fill="#000"/><rect x="3" y="12" width="3" height="1" fill="#000"/><rect x="7" y="12" width="1" height="1" fill="#000"/><rect x="9" y="12" width="1" height="1" fill="#000"/><rect x="11" y="12" width="1" height="1" fill="#000"/><rect x="8" y="12" width="1" height="1" fill="#fff"/><rect x="10" y="12" width="1" height="1" fill="#fff"/><rect x="1" y="13" width="1" height="1" fill="#000"/><rect x="7" y="13" width="3" height="1" fill="#000"/><rect x="11" y="13" width="2" height="1" fill="#000"/><rect x="14" y="13" width="1" height="1" fill="#000"/><rect x="10" y="13" width="1" height="1" fill="#fff"/><rect x="1" y="14" width="5" height="1" fill="#000"/><rect x="7" y="14" width="1" height="1" fill="#000"/><rect x="10" y="14" width="1" height="1" fill="#000"/><rect x="12" y="14" width="1" height="1" fill="#000"/><rect x="14" y="14" width="1" height="1" fill="#000"/><rect x="11" y="14" width="1" height="1" fill="#fff"/><rect x="11" y="15" width="2" height="1" fill="#000"/></svg></div>
<div class="f" style="left:697px;top:504px;width:46px;height:19px;line-height:18px;padding-left:2px;"><span style="letter-spacing:0.00px;left:-0.9px;">1</span></div>
<div class="t " style="left:591px;top:505px;height:19px;line-height:19px;"><span style="letter-spacing:0.03px;left:-0.4px;">Sohle:</span></div>
<div class="f" style="left:746px;top:504px;width:298px;height:19px;line-height:18px;padding-left:2px;"><span style="letter-spacing:0.16px;left:-1.3px;">natürlich, unbeeinträchtigt bis sehr gering beeinträchtigt</span></div>
<div class="b " style="left:1046px;top:501px;width:26px;height:26px;line-height:26px"><svg width="16" height="16" viewBox="0 0 16 16" shape-rendering="crispEdges"><rect x="1" y="1" width="14" height="1" fill="#1ea9f3"/><rect x="1" y="2" width="14" height="1" fill="#1ea9f3"/><rect x="1" y="3" width="1" height="1" fill="#000"/><rect x="14" y="3" width="1" height="1" fill="#000"/><rect x="1" y="4" width="1" height="1" fill="#000"/><rect x="3" y="4" width="3" height="1" fill="#000"/><rect x="7" y="4" width="1" height="1" fill="#000"/><rect x="10" y="4" width="1" height="1" fill="#000"/><rect x="12" y="4" width="1" height="1" fill="#000"/><rect x="14" y="4" width="1" height="1" fill="#000"/><rect x="1" y="5" width="1" height="1" fill="#000"/><rect x="7" y="5" width="2" height="1" fill="#000"/><rect x="14" y="5" width="1" height="1" fill="#000"/><rect x="1" y="6" width="1" height="1" fill="#000"/><rect x="3" y="6" width="3" height="1" fill="#000"/><rect x="7" y="6" width="1" height="1" fill="#000"/><rect x="9" y="6" width="2" height="1" fill="#000"/><rect x="12" y="6" width="1" height="1" fill="#000"/><rect x="14" y="6" width="1" height="1" fill="#000"/><rect x="8" y="6" width="1" height="1" fill="#fff"/><rect x="1" y="7" width="1" height="1" fill="#000"/><rect x="7" y="7" width="1" height="1" fill="#000"/><rect x="10" y="7" width="2" height="1" fill="#000"/><rect x="14" y="7" width="1" height="1" fill="#000"/><rect x="8" y="7" width="2" height="1" fill="#fff"/><rect x="1" y="8" width="1" height="1" fill="#000"/><rect x="3" y="8" width="3" height="1" fill="#000"/><rect x="7" y="8" width="1" height="1" fill="#000"/><rect x="11" y="8" width="2" height="1" fill="#000"/><rect x="14" y="8" width="1" height="1" fill="#000"/><rect x="8" y="8" width="3" height="1" fill="#fff"/><rect x="1" y="9" width="1" height="1" fill="#000"/><rect x="7" y="9" width="1" height="1" fill="#000"/><rect x="12" y="9" width="1" height="1" fill="#000"/><rect x="8" y="9" width="4" height="1" fill="#fff"/><rect x="1" y="10" width="1" height="1" fill="#000"/><rect x="3" y="10" width="3" height="1" fill="#000"/><rect x="7" y="10" width="1" height="1" fill="#000"/><rect x="13" y="10" width="1" height="1" fill="#000"/><rect x="8" y="10" width="5" height="1" fill="#fff"/><rect x="1" y="11" width="1" height="1" fill="#000"/><rect x="7" y="11" width="1" height="1" fill="#000"/><rect x="11" y="11" width="4" height="1" fill="#000"/><rect x="8" y="11" width="3" height="1" fill="#fff"/><rect x="1" y="12" width="1" height="1" fill="#000"/><rect x="3" y="12" width="3" height="1" fill="#000"/><rect x="7" y="12" width="1" height="1" fill="#000"/><rect x="9" y="12" width="1" height="1" fill="#000"/><rect x="11" y="12" width="1" height="1" fill="#000"/><rect x="8" y="12" width="1" height="1" fill="#fff"/><rect x="10" y="12" width="1" height="1" fill="#fff"/><rect x="1" y="13" width="1" height="1" fill="#000"/><rect x="7" y="13" width="3" height="1" fill="#000"/><rect x="11" y="13" width="2" height="1" fill="#000"/><rect x="14" y="13" width="1" height="1" fill="#000"/><rect x="10" y="13" width="1" height="1" fill="#fff"/><rect x="1" y="14" width="5" height="1" fill="#000"/><rect x="7" y="14" width="1" height="1" fill="#000"/><rect x="10" y="14" width="1" height="1" fill="#000"/><rect x="12" y="14" width="1" height="1" fill="#000"/><rect x="14" y="14" width="1" height="1" fill="#000"/><rect x="11" y="14" width="1" height="1" fill="#fff"/><rect x="11" y="15" width="2" height="1" fill="#000"/></svg></div>
<div class="t " style="left:591px;top:531px;height:19px;line-height:19px;"><span style="letter-spacing:0.01px;left:0.4px;">Gehölzsaum:</span></div>
<div class="f" style="left:697px;top:530px;width:46px;height:19px;line-height:18px;padding-left:2px;"><span style="letter-spacing:0.26px;left:-1.5px;">1-2</span></div>
<div class="f" style="left:746px;top:530px;width:298px;height:19px;line-height:18px;padding-left:2px;"><span style="letter-spacing:0.18px;left:-1.3px;">naturnah, gering beeinträchtigt</span></div>
<div class="b " style="left:1046px;top:527px;width:26px;height:26px;line-height:26px"><svg width="16" height="16" viewBox="0 0 16 16" shape-rendering="crispEdges"><rect x="1" y="1" width="14" height="1" fill="#1ea9f3"/><rect x="1" y="2" width="14" height="1" fill="#1ea9f3"/><rect x="1" y="3" width="1" height="1" fill="#000"/><rect x="14" y="3" width="1" height="1" fill="#000"/><rect x="1" y="4" width="1" height="1" fill="#000"/><rect x="3" y="4" width="3" height="1" fill="#000"/><rect x="7" y="4" width="1" height="1" fill="#000"/><rect x="10" y="4" width="1" height="1" fill="#000"/><rect x="12" y="4" width="1" height="1" fill="#000"/><rect x="14" y="4" width="1" height="1" fill="#000"/><rect x="1" y="5" width="1" height="1" fill="#000"/><rect x="7" y="5" width="2" height="1" fill="#000"/><rect x="14" y="5" width="1" height="1" fill="#000"/><rect x="1" y="6" width="1" height="1" fill="#000"/><rect x="3" y="6" width="3" height="1" fill="#000"/><rect x="7" y="6" width="1" height="1" fill="#000"/><rect x="9" y="6" width="2" height="1" fill="#000"/><rect x="12" y="6" width="1" height="1" fill="#000"/><rect x="14" y="6" width="1" height="1" fill="#000"/><rect x="8" y="6" width="1" height="1" fill="#fff"/><rect x="1" y="7" width="1" height="1" fill="#000"/><rect x="7" y="7" width="1" height="1" fill="#000"/><rect x="10" y="7" width="2" height="1" fill="#000"/><rect x="14" y="7" width="1" height="1" fill="#000"/><rect x="8" y="7" width="2" height="1" fill="#fff"/><rect x="1" y="8" width="1" height="1" fill="#000"/><rect x="3" y="8" width="3" height="1" fill="#000"/><rect x="7" y="8" width="1" height="1" fill="#000"/><rect x="11" y="8" width="2" height="1" fill="#000"/><rect x="14" y="8" width="1" height="1" fill="#000"/><rect x="8" y="8" width="3" height="1" fill="#fff"/><rect x="1" y="9" width="1" height="1" fill="#000"/><rect x="7" y="9" width="1" height="1" fill="#000"/><rect x="12" y="9" width="1" height="1" fill="#000"/><rect x="8" y="9" width="4" height="1" fill="#fff"/><rect x="1" y="10" width="1" height="1" fill="#000"/><rect x="3" y="10" width="3" height="1" fill="#000"/><rect x="7" y="10" width="1" height="1" fill="#000"/><rect x="13" y="10" width="1" height="1" fill="#000"/><rect x="8" y="10" width="5" height="1" fill="#fff"/><rect x="1" y="11" width="1" height="1" fill="#000"/><rect x="7" y="11" width="1" height="1" fill="#000"/><rect x="11" y="11" width="4" height="1" fill="#000"/><rect x="8" y="11" width="3" height="1" fill="#fff"/><rect x="1" y="12" width="1" height="1" fill="#000"/><rect x="3" y="12" width="3" height="1" fill="#000"/><rect x="7" y="12" width="1" height="1" fill="#000"/><rect x="9" y="12" width="1" height="1" fill="#000"/><rect x="11" y="12" width="1" height="1" fill="#000"/><rect x="8" y="12" width="1" height="1" fill="#fff"/><rect x="10" y="12" width="1" height="1" fill="#fff"/><rect x="1" y="13" width="1" height="1" fill="#000"/><rect x="7" y="13" width="3" height="1" fill="#000"/><rect x="11" y="13" width="2" height="1" fill="#000"/><rect x="14" y="13" width="1" height="1" fill="#000"/><rect x="10" y="13" width="1" height="1" fill="#fff"/><rect x="1" y="14" width="5" height="1" fill="#000"/><rect x="7" y="14" width="1" height="1" fill="#000"/><rect x="10" y="14" width="1" height="1" fill="#000"/><rect x="12" y="14" width="1" height="1" fill="#000"/><rect x="14" y="14" width="1" height="1" fill="#000"/><rect x="11" y="14" width="1" height="1" fill="#fff"/><rect x="11" y="15" width="2" height="1" fill="#000"/></svg></div>
<div class="t " style="left:591px;top:555px;height:19px;line-height:19px;"><span style="letter-spacing:-0.02px;left:0.3px;">Gesamtbewertung:</span></div>
<div class="f" style="left:697px;top:554px;width:46px;height:19px;line-height:18px;padding-left:2px;"><span style="letter-spacing:0.00px;left:-0.9px;">3</span></div>
<div class="f" style="left:746px;top:554px;width:298px;height:19px;line-height:18px;padding-left:2px;"><span style="letter-spacing:0.18px;left:-0.8px;">stark beeinträchtigt</span></div>
<div class="g" style="left:582px;top:599px;width:496px;height:113px"><div class="gi"></div></div>
<div class="t gt" style="left:604px;top:591px;height:19px;line-height:19px;"><span style="letter-spacing:0.24px;left:0.5px;">Handlungsbedarf</span></div>
<div class="t " style="left:591px;top:619px;height:19px;line-height:19px;"><span style="letter-spacing:-0.20px;left:0.2px;">Ziel:</span></div>
<div class="f" style="left:618px;top:616px;width:426px;height:19px;line-height:18px;padding-left:2px;"><span style="letter-spacing:0.03px;left:-0.8px;">sichern (erhalten)</span></div>
<div class="b " style="left:1046px;top:615px;width:26px;height:26px;line-height:26px"><svg width="16" height="16" viewBox="0 0 16 16" shape-rendering="crispEdges"><rect x="1" y="1" width="14" height="1" fill="#1ea9f3"/><rect x="1" y="2" width="14" height="1" fill="#1ea9f3"/><rect x="1" y="3" width="1" height="1" fill="#000"/><rect x="14" y="3" width="1" height="1" fill="#000"/><rect x="1" y="4" width="1" height="1" fill="#000"/><rect x="3" y="4" width="3" height="1" fill="#000"/><rect x="7" y="4" width="1" height="1" fill="#000"/><rect x="10" y="4" width="1" height="1" fill="#000"/><rect x="12" y="4" width="1" height="1" fill="#000"/><rect x="14" y="4" width="1" height="1" fill="#000"/><rect x="1" y="5" width="1" height="1" fill="#000"/><rect x="7" y="5" width="2" height="1" fill="#000"/><rect x="14" y="5" width="1" height="1" fill="#000"/><rect x="1" y="6" width="1" height="1" fill="#000"/><rect x="3" y="6" width="3" height="1" fill="#000"/><rect x="7" y="6" width="1" height="1" fill="#000"/><rect x="9" y="6" width="2" height="1" fill="#000"/><rect x="12" y="6" width="1" height="1" fill="#000"/><rect x="14" y="6" width="1" height="1" fill="#000"/><rect x="8" y="6" width="1" height="1" fill="#fff"/><rect x="1" y="7" width="1" height="1" fill="#000"/><rect x="7" y="7" width="1" height="1" fill="#000"/><rect x="10" y="7" width="2" height="1" fill="#000"/><rect x="14" y="7" width="1" height="1" fill="#000"/><rect x="8" y="7" width="2" height="1" fill="#fff"/><rect x="1" y="8" width="1" height="1" fill="#000"/><rect x="3" y="8" width="3" height="1" fill="#000"/><rect x="7" y="8" width="1" height="1" fill="#000"/><rect x="11" y="8" width="2" height="1" fill="#000"/><rect x="14" y="8" width="1" height="1" fill="#000"/><rect x="8" y="8" width="3" height="1" fill="#fff"/><rect x="1" y="9" width="1" height="1" fill="#000"/><rect x="7" y="9" width="1" height="1" fill="#000"/><rect x="12" y="9" width="1" height="1" fill="#000"/><rect x="8" y="9" width="4" height="1" fill="#fff"/><rect x="1" y="10" width="1" height="1" fill="#000"/><rect x="3" y="10" width="3" height="1" fill="#000"/><rect x="7" y="10" width="1" height="1" fill="#000"/><rect x="13" y="10" width="1" height="1" fill="#000"/><rect x="8" y="10" width="5" height="1" fill="#fff"/><rect x="1" y="11" width="1" height="1" fill="#000"/><rect x="7" y="11" width="1" height="1" fill="#000"/><rect x="11" y="11" width="4" height="1" fill="#000"/><rect x="8" y="11" width="3" height="1" fill="#fff"/><rect x="1" y="12" width="1" height="1" fill="#000"/><rect x="3" y="12" width="3" height="1" fill="#000"/><rect x="7" y="12" width="1" height="1" fill="#000"/><rect x="9" y="12" width="1" height="1" fill="#000"/><rect x="11" y="12" width="1" height="1" fill="#000"/><rect x="8" y="12" width="1" height="1" fill="#fff"/><rect x="10" y="12" width="1" height="1" fill="#fff"/><rect x="1" y="13" width="1" height="1" fill="#000"/><rect x="7" y="13" width="3" height="1" fill="#000"/><rect x="11" y="13" width="2" height="1" fill="#000"/><rect x="14" y="13" width="1" height="1" fill="#000"/><rect x="10" y="13" width="1" height="1" fill="#fff"/><rect x="1" y="14" width="5" height="1" fill="#000"/><rect x="7" y="14" width="1" height="1" fill="#000"/><rect x="10" y="14" width="1" height="1" fill="#000"/><rect x="12" y="14" width="1" height="1" fill="#000"/><rect x="14" y="14" width="1" height="1" fill="#000"/><rect x="11" y="14" width="1" height="1" fill="#fff"/><rect x="11" y="15" width="2" height="1" fill="#000"/></svg></div>
<div class="t " style="left:591px;top:645px;height:19px;line-height:19px;"><span style="letter-spacing:0.07px;left:-0.2px;">Bemerkung:</span></div>
<div class="f" style="left:589px;top:666px;width:463px;height:36px;line-height:35px;padding-left:2px;"></div>
<svg class="abs" style="left:1055px;top:666px" width="17" height="36" viewBox="0 0 17 36"><g shape-rendering="crispEdges"><rect x="0" y="0" width="17" height="36" fill="#f8f8f8"/><rect x="0" y="0" width="17" height="1" fill="#828282"/><rect x="0" y="0" width="1" height="36" fill="#828282"/><rect x="1" y="1" width="15" height="34" fill="#b4b4b4"/><rect x="1" y="15" width="15" height="1" fill="#828282"/><rect x="1" y="16" width="15" height="1" fill="#f8f8f8"/><rect x="1" y="18" width="15" height="1" fill="#828282"/><rect x="1" y="19" width="15" height="1" fill="#f4f4f4"/></g><path d="M1.2 15 L7.8 1.8 L14.4 15 Z" fill="#eeeeee"/><path d="M1.2 20 L14.4 20 L7.8 33.6 Z" fill="#eeeeee"/><path d="M8 2 L14.6 15 M14.6 20 L8 33.6" stroke="#8a8a8a" stroke-width="0.8" fill="none"/></svg>
<div class="abs" style="left:65px;top:734px;width:1035px;height:1px;background:#8e8e8e"></div>
<div class="abs" style="left:65px;top:735px;width:1035px;height:1px;background:#fbfbfb"></div>
<div class="abs" style="left:65px;top:735px;width:1px;height:37px;background:#fbfbfb"></div>
<div class="b " style="left:394px;top:742px;width:123px;height:25px;line-height:25px"><span style="letter-spacing:-0.80px;left:-0.4px;">OK</span></div>
<div class="b " style="left:521px;top:742px;width:122px;height:25px;line-height:25px"><span style="letter-spacing:-0.04px;left:0.4px;">Abbrechen</span></div>
<div class="b " style="left:647px;top:742px;width:123px;height:25px;line-height:25px"><span style="letter-spacing:0.40px;left:0.3px;">Hilfe</span></div>
</body></html>
